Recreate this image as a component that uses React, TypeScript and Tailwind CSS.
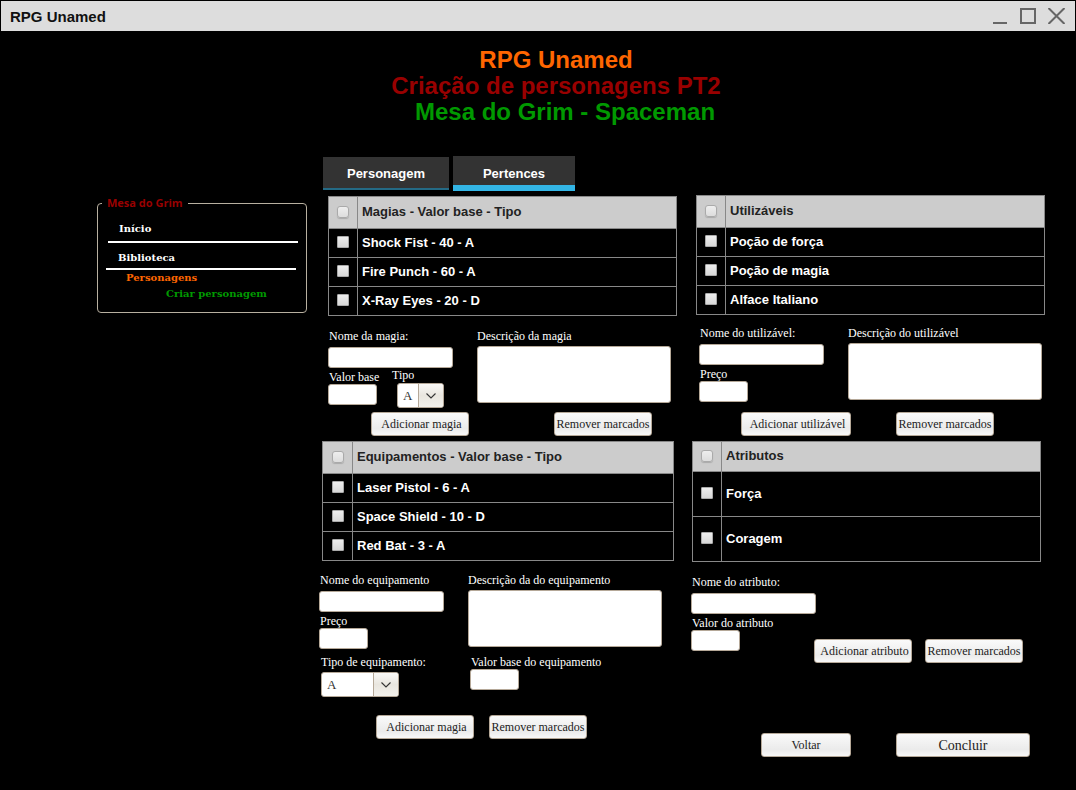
import React, { useId } from "react";

const SERIF = "font-['Liberation_Serif',serif] text-[12px]";
const FIELD = "block rounded-[3px] border border-[#b5a898] bg-white px-1 text-black outline-none " + SERIF;
const LABEL = "block h-[14px] whitespace-nowrap leading-[14px] text-white " + SERIF;

function TextField({ label, className, gap = "" }: { label: string; className: string; gap?: string }) {
  const id = useId();
  return (
    <div>
      <label htmlFor={id} className={`${LABEL} ${gap} pl-px`}>{label}</label>
      <input id={id} type="text" className={`${FIELD} h-[21px] ${className}`} />
    </div>
  );
}

function TextArea({ label }: { label: string }) {
  const id = useId();
  return (
    <div>
      <label htmlFor={id} className={`${LABEL} mb-[3px]`}>{label}</label>
      <textarea id={id} className={`${FIELD} h-[57px] w-[194px] resize-none`} />
    </div>
  );
}

function Select({ label, className, gap }: { label: string; className: string; gap: string }) {
  const id = useId();
  return (
    <div>
      <label htmlFor={id} className={`${LABEL} ${gap}`}>{label}</label>
      <div className={`relative ${className}`}>
        <select id={id} className="block h-[25px] w-full appearance-none rounded-[3px] border border-[#b5a898] bg-white pl-[5px] font-['Liberation_Serif',serif] text-[13px] text-[#333]">
          <option>A</option>
          <option>D</option>
        </select>
        <span className="pointer-events-none absolute inset-y-px right-px flex w-[25px] items-center justify-center rounded-r-[2px] border-l border-[#b5a898] bg-linear-to-b from-[#faf9f7] via-[#e9e6df] to-[#f3f1ec]">
          <svg width="10" height="6" viewBox="0 0 10 6" fill="none" stroke="#333" strokeWidth="1.1">
            <path d="M0.5 0.5 L5 5 L9.5 0.5" />
          </svg>
        </span>
      </div>
    </div>
  );
}

function Button({ children, className }: { children: React.ReactNode; className: string }) {
  return (
    <button
      type="button"
      className={`h-6 whitespace-nowrap rounded-[3px] border border-[#b5a898] bg-linear-to-b from-[#fafafa] via-[#ebebeb] via-70% to-[#f8f8f8] font-['Liberation_Serif',serif] text-[#222] ${className}`}
    >
      {children}
    </button>
  );
}

type TableProps = {
  title: string;
  rows: string[];
  checkCol?: string;
  headHeight?: string;
  rowHeight?: string;
};

function CheckTable({ title, rows, checkCol = "w-[29px]", headHeight = "h-[32px]", rowHeight = "h-[29px]" }: TableProps) {
  return (
    <table className="w-full table-fixed border-collapse border border-[#666] font-['Liberation_Sans',sans-serif] text-[13px] leading-[15px] font-bold">
      <thead>
        <tr className={`${headHeight} bg-[#ccc] text-[#222]`}>
          <th className={`${checkCol} border border-[#888] p-0`}>
            <input type="checkbox" aria-label={`Marcar todos: ${title}`} className="mx-auto mb-[2px] block size-3 appearance-none rounded-[3px] border border-[#aaa] bg-linear-to-b from-[#eee] to-[#ddd] shadow-[0_1px_1px_#aaa]" />
          </th>
          <th className="border border-[#888] p-0 pb-[2px] pl-1 text-left">{title}</th>
        </tr>
      </thead>
      <tbody>
        {rows.map((row) => (
          <tr key={row} className={`${rowHeight} text-white`}>
            <td className="border border-[#888] p-0">
              <input type="checkbox" aria-label={row} className="mx-auto mb-[2px] block size-3 appearance-none rounded-[1px] border border-[#aaa] bg-linear-to-b from-[#eee] to-[#d8d8d8]" />
            </td>
            <td className="border border-[#888] p-0 pb-px pl-1">{row}</td>
          </tr>
        ))}
      </tbody>
    </table>
  );
}

function TitleBar() {
  return (
    <div className="mx-px mt-px flex h-[30px] items-center justify-between bg-[#ddd] pr-[10px] pl-[9px]">
      <span className="pt-[2px] text-[15px] leading-5 font-bold text-[#111]">RPG Unamed</span>
      <div className="flex items-center gap-3">
        <button type="button" aria-label="Minimizar">
          <svg width="16" height="16" viewBox="0 0 16 16" stroke="#666" strokeWidth="2"><path d="M1 15H15" /></svg>
        </button>
        <button type="button" aria-label="Maximizar">
          <svg width="16" height="16" viewBox="0 0 16 16" fill="none" stroke="#666" strokeWidth="2"><path d="M1 1H15V15H1Z" /></svg>
        </button>
        <button type="button" aria-label="Fechar">
          <svg width="17" height="16" viewBox="0 0 17 16" stroke="#666" strokeWidth="2"><path d="M0.5 0L16.5 16M16.5 0L0.5 16" /></svg>
        </button>
      </div>
    </div>
  );
}

function Sidebar() {
  return (
    <fieldset className="mt-10 mr-3 rounded-[4px] border border-[#b8b0a0] pb-[11px] font-['DejaVu_Serif',serif] text-[10px] leading-[14px] font-bold">
      <legend className="ml-1 px-[5px] font-['Open_Sans',sans-serif] text-[11px] text-[#900]">Mesa do Grim</legend>
      <nav className="flex flex-col pt-3">
        <a href="#inicio" className="pl-[21px] text-white">Início</a>
        <hr className="mt-[5px] mr-2 ml-[10px] border-t-2 border-white" />
        <a href="#biblioteca" className="mt-2 pl-5 text-white">Biblioteca</a>
        <hr className="mt-[3px] mr-[10px] ml-2 border-t-2 border-white" />
        <a href="#personagens" className="mt-px pl-[28px] text-[#f60]">Personagens</a>
        <a href="#criar" className="mt-[2px] pl-[68px] text-[#090]">Criar personagem</a>
      </nav>
    </fieldset>
  );
}

export default function App() {
  return (
    <div className="flex min-h-screen flex-col bg-black font-['Liberation_Sans',sans-serif]">
      <TitleBar />
      <header className="pt-4 pb-[31px] pl-9 text-center text-[24px] leading-[26px] font-bold">
        <h1 className="text-[#f60]">RPG Unamed</h1>
        <h2 className="text-[#900]">Criação de personagens PT2</h2>
        <h3 className="pl-[18px] text-[#090]">Mesa do Grim - Spaceman</h3>
      </header>

      <main className="grid grid-cols-[222px_372fr_354fr] items-start pr-[31px] pl-[97px]">
        <Sidebar />

        <div>
          <div role="tablist" className="flex h-[40px] items-start gap-1 pl-1 text-[13px] font-bold text-white">
            <button type="button" role="tab" aria-selected="false" className="mt-px h-[33px] w-[126px] border-b-2 border-[#246a85] bg-[#333] pt-[2px]">Personagem</button>
            <button type="button" role="tab" aria-selected="true" className="h-[35px] w-[122px] border-b-[6px] border-[#33b5e5] bg-[#333] pt-[6px]">Pertences</button>
          </div>

          <section className="pr-[14px] pl-[9px]">
            <CheckTable title="Magias - Valor base - Tipo" rows={["Shock Fist - 40 - A", "Fire Punch - 60 - A", "X-Ray Eyes - 20 - D"]} />
            <div className="flex gap-6 pt-[13px]">
              <div className="w-[125px]">
                <TextField label="Nome da magia:" gap="mb-1" className="w-full" />
                <div className="flex">
                  <div className="w-16 pt-[2px]">
                    <TextField label="Valor base" className="w-[49px]" />
                  </div>
                  <Select label="Tipo" gap="mb-px" className="ml-[5px] w-[47px]" />
                </div>
              </div>
              <TextArea label="Descrição da magia" />
            </div>
            <div className="flex gap-[85px] pt-1 pl-[43px] text-[12px]">
              <Button className="w-[98px] pl-[3px]">Adicionar magia</Button>
              <Button className="w-[98px]">Remover marcados</Button>
            </div>
          </section>

          <section className="pt-[5px]">
            <div className="pr-[17px] pl-[3px]">
              <CheckTable checkCol="w-[30px]" title="Equipamentos - Valor base - Tipo" rows={["Laser Pistol - 6 - A", "Space Shield - 10 - D", "Red Bat - 3 - A"]} />
            </div>
            <div className="flex gap-6 pt-3">
              <div className="flex w-[125px] flex-col gap-[2px]">
                <TextField label="Nome do equipamento" gap="mb-1" className="w-full" />
                <TextField label="Preço" className="w-[49px]" />
              </div>
              <TextArea label="Descrição da do equipamento" />
            </div>
            <div className="flex pt-[6px] pl-[2px]">
              <div className="w-[149px]">
                <Select label="Tipo de equipamento:" gap="mb-[3px]" className="w-[78px]" />
              </div>
              <TextField label="Valor base do equipamento" className="w-[49px]" />
            </div>
            <div className="flex gap-[15px] pt-[18px] pl-[57px] text-[12px]">
              <Button className="w-[98px] pl-[3px]">Adicionar magia</Button>
              <Button className="w-[98px]">Remover marcados</Button>
            </div>
          </section>
        </div>

        <div className="pt-[39px]">
          <section>
            <div className="pl-[5px]">
              <CheckTable title="Utilizáveis" rows={["Poção de força", "Poção de magia", "Alface Italiano"]} />
            </div>
            <div className="flex gap-6 pt-[11px] pl-2">
              <div className="flex w-[125px] flex-col gap-[2px]">
                <TextField label="Nome do utilizável:" gap="mb-1" className="w-full" />
                <TextField label="Preço" className="w-[49px]" />
              </div>
              <TextArea label="Descrição do utilizável" />
            </div>
            <div className="flex gap-[45px] pt-[10px] pl-[50px] text-[12px]">
              <Button className="w-[110px] pl-[3px]">Adicionar utilizável</Button>
              <Button className="w-[98px]">Remover marcados</Button>
            </div>
          </section>

          <section className="pt-[5px]">
            <div className="pr-1 pl-px">
              <CheckTable headHeight="h-[30px]" rowHeight="h-[45px]" title="Atributos" rows={["Força", "Coragem"]} />
            </div>
            <div className="pt-[13px]">
              <TextField label="Nome do atributo:" gap="mb-1" className="w-[125px]" />
              <div className="flex">
                <div className="w-[123px] pt-[2px]">
                  <TextField label="Valor do atributo" className="w-[49px]" />
                </div>
                <div className="flex gap-[13px] pt-[25px] text-[12px]">
                  <Button className="w-[98px] pl-[3px]">Adicionar atributo</Button>
                  <Button className="w-[98px]">Remover marcados</Button>
                </div>
              </div>
            </div>
          </section>

          <div className="flex gap-[45px] pt-[70px] pl-[70px]">
            <Button className="w-[90px] text-[12px]">Voltar</Button>
            <Button className="w-[134px] text-[14px]">Concluir</Button>
          </div>
        </div>
      </main>
    </div>
  );
}
